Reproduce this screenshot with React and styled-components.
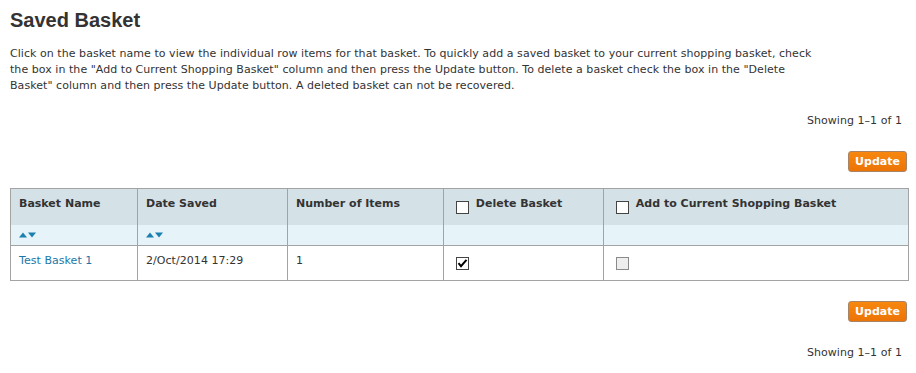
import React from 'react'
import styled, { createGlobalStyle } from 'styled-components'

const GlobalStyle = createGlobalStyle`
    body {
        margin: 0;
        background: #fff;
        font-family: "DejaVu Sans", Verdana, sans-serif;
        font-size: 11px;
        letter-spacing: 0.05px;
        color: #333;
    }
`

const Page = styled.div`
    padding: 9px 8px 0 10px;
`
const Title = styled.h1`
    font-family: "Liberation Sans", Arial, sans-serif;
    font-size: 20px;
    line-height: 23px;
    font-weight: 700;
    letter-spacing: 0;
    color: #333;
    margin: 0 0 14px;
`
const Intro = styled.p`
    margin: 0;
    max-width: 818px;
    line-height: 16px;
`
const Showing = styled.div`
    text-align: right;
    line-height: 16px;
    padding-right: 6px;
    margin-top: ${props => props.top || 0}px;
`
const ButtonRow = styled.div`
    display: flex;
    justify-content: flex-end;
    margin-top: ${props => props.top || 0}px;
    padding-right: 1px;
`
const Button = styled.button`
    width: 59px;
    height: 21px;
    padding: 0;
    border: 1px solid #a88466;
    border-radius: 3px;
    background: linear-gradient(#f7870f, #ec7406);
    color: #fff;
    font-family: "DejaVu Sans", Verdana, sans-serif;
    font-size: 11px;
    font-weight: 700;
    cursor: pointer;
`
const Table = styled.table`
    width: 898px;
    margin-top: 16px;
    border-collapse: collapse;
    table-layout: fixed;
    border: 1px solid #a3a3a3;
`
const Th = styled.th`
    background: #d4e1e7;
    text-align: left;
    vertical-align: top;
    font-weight: 700;
    letter-spacing: 0;
    line-height: 16px;
    height: 36px;
    box-sizing: border-box;
    padding: 7px 8px 0;
    border-left: 1px solid #a3a3a3;
    color: #333;
`
const SortCell = styled.td`
    background: #e6f3f8;
    height: 21px;
    box-sizing: border-box;
    padding: 0 8px;
    border-left: 1px solid #a3a3a3;
    border-bottom: 1px solid #a3a3a3;
    vertical-align: middle;
`
const Td = styled.td`
    height: 35px;
    box-sizing: border-box;
    padding: 7px 8px 0;
    vertical-align: top;
    line-height: 16px;
    border-left: 1px solid #a3a3a3;
`
const Link = styled.a`
    color: #1c77a8;
    text-decoration: none;
    cursor: pointer;
`
const CheckLabel = styled.span`
    display: inline-flex;
    align-items: flex-start;
`
const Box = styled.span`
    display: inline-flex;
    align-items: center;
    justify-content: center;
    box-sizing: border-box;
    width: 13px;
    height: 13px;
    margin: ${props => props.top || 5}px 3px 0 4px;
    border: 1px solid ${props => props.disabled ? '#8a8a8a' : '#444'};
    background: ${props => props.disabled ? '#eeeeee' : '#fff'};
    flex-shrink: 0;
`
const Arrows = styled.svg`
    display: block;
    margin-top: 1px;
`

const SortArrows = () => (
    <Arrows width="17" height="6" viewBox="0 0 17 6">
        <polygon points="0,5.5 4,0.5 8,5.5" fill="#1a80b0" />
        <polygon points="9,0.5 17,0.5 13,5.5" fill="#1a80b0" />
    </Arrows>
)

const Check = ({ checked, disabled, top }) => (
    <Box disabled={disabled} top={top}>
        {checked && (
            <svg width="11" height="11" viewBox="0 0 11 11">
                <path d="M1.5 5.2 L4 8.2 L9.5 1.8" stroke="#000" strokeWidth="2" fill="none" />
            </svg>
        )}
    </Box>
)

const App = () => {
    return (
        <Page>
            <GlobalStyle />
            <Title>Saved Basket</Title>
            <Intro>
                Click on the basket name to view the individual row items for that basket. To quickly add a saved basket to your current shopping basket, check the box in the "Add to Current Shopping Basket" column and then press the Update button. To delete a basket check the box in the "Delete Basket" column and then press the Update button. A deleted basket can not be recovered.
            </Intro>
            <Showing top={19}>Showing 1–1 of 1</Showing>
            <ButtonRow top={22}>
                <Button>Update</Button>
            </ButtonRow>
            <Table>
                <colgroup>
                    <col style={{ width: 127 }} />
                    <col style={{ width: 150 }} />
                    <col style={{ width: 156 }} />
                    <col style={{ width: 160 }} />
                    <col style={{ width: 305 }} />
                </colgroup>
                <thead>
                    <tr>
                        <Th>Basket Name</Th>
                        <Th>Date Saved</Th>
                        <Th>Number of Items</Th>
                        <Th>
                            <CheckLabel><Check />&nbsp;Delete Basket</CheckLabel>
                        </Th>
                        <Th>
                            <CheckLabel><Check />&nbsp;Add to Current Shopping Basket</CheckLabel>
                        </Th>
                    </tr>
                    <tr>
                        <SortCell><SortArrows /></SortCell>
                        <SortCell><SortArrows /></SortCell>
                        <SortCell />
                        <SortCell />
                        <SortCell />
                    </tr>
                </thead>
                <tbody>
                    <tr>
                        <Td><Link>Test Basket 1</Link></Td>
                        <Td>2/Oct/2014 17:29</Td>
                        <Td>1</Td>
                        <Td><Check checked top={4} /></Td>
                        <Td><Check disabled top={4} /></Td>
                    </tr>
                </tbody>
            </Table>
            <ButtonRow top={20}>
                <Button>Update</Button>
            </ButtonRow>
            <Showing top={23}>Showing 1–1 of 1</Showing>
        </Page>
    )
}

export default App
